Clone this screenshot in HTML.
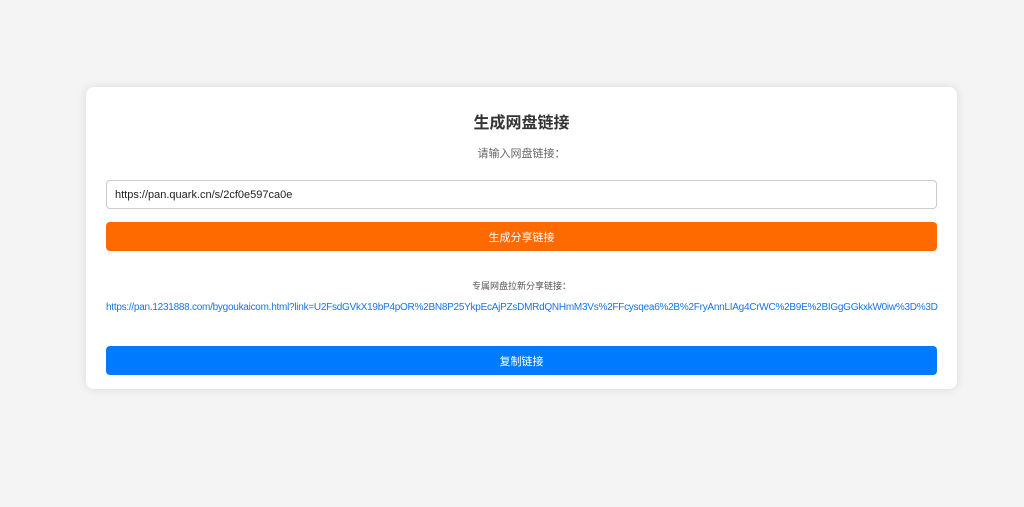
<!DOCTYPE html>
<html><head><meta charset="utf-8"><style>
body{margin:0;background:#f4f4f4;width:1024px;height:507px;font-family:"Liberation Sans","Noto Sans CJK SC",sans-serif;overflow:hidden}
.card{position:absolute;left:86px;top:87px;width:871px;height:302px;background:#fff;border-radius:8px;box-shadow:0 0 10px rgba(0,0,0,.1)}
.t{position:absolute;left:86px;width:871px;text-align:center}
h1{position:absolute;left:86px;width:871px;top:114px;margin:0;text-align:center;font-size:16px;font-weight:bold;color:#333;line-height:20px}
.box{position:absolute;left:106px;width:829px;border-radius:4px}
</style></head><body>
<div class="card"></div>
<h1>生成网盘链接</h1>
<div class="t" style="top:147px;font-size:11px;color:#666;line-height:14px">请输入网盘链接：</div>
<div class="box" style="top:180px;height:27px;border:1px solid #ccc;font-size:11px;line-height:29px;color:#222;padding-left:8px;width:821px">https://pan.quark.cn/s/2cf0e597ca0e</div>
<div class="box" style="top:222px;height:29px;background:#ff6a00;color:#fff;font-size:11px;line-height:32px;text-align:center;width:831px">生成分享链接</div>
<div class="t" style="top:280px;font-size:9px;color:#555;line-height:12px">专属网盘拉新分享链接：</div>
<div style="position:absolute;left:106px;top:301px;width:831px;white-space:nowrap;font-size:10px;color:#1a73e8;line-height:14px;letter-spacing:-0.26px">https://pan.1231888.com/bygoukaicom.html?link=U2FsdGVkX19bP4pOR%2BN8P25YkpEcAjPZsDMRdQNHmM3Vs%2FFcysqea6%2B%2FryAnnLIAg4CrWC%2B9E%2BIGgGGkxkW0iw%3D%3D</div>
<div class="box" style="top:346px;height:29px;background:#007bff;color:#fff;font-size:11px;line-height:32px;text-align:center;width:831px">复制链接</div>
</body></html>
